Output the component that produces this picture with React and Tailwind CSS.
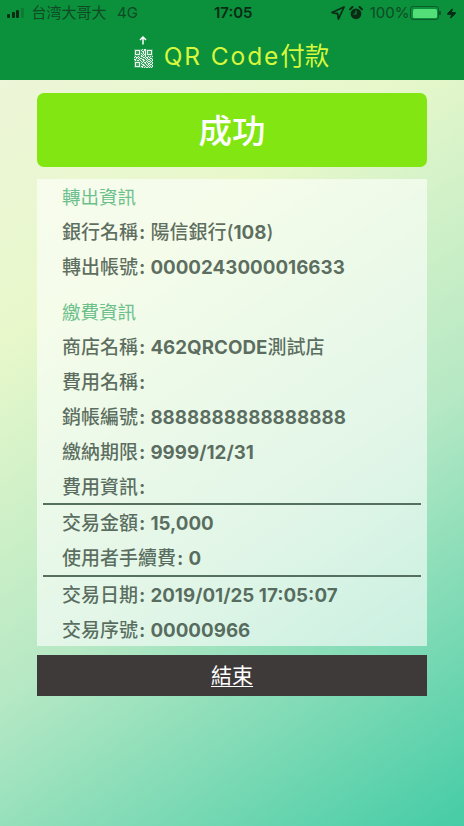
import React from 'react';
import { Zap } from 'lucide-react';

const FONT = 'font-["Inter","Noto_Sans_CJK_TC",sans-serif]';

// qr pattern, finder squares are added separately
const QR_ROWS = [
    '0000000101000000000',
    '0000000011000000000',
    '0000000100100000000',
    '0000000110100000000',
    '0000000010100000000',
    '0000000101000000000',
    '0000000010100000000',
    '1011011001101101010',
    '0100101110010010111',
    '1101010011101011001',
    '0011101100110100110',
    '1010010110011011010',
    '0000000010110100101',
    '0000000101001011010',
    '0000000011101100110',
    '0000000100110101001',
    '0000000110011010110',
    '0000000001101101010',
    '0000000101010010101',
];

const Finder = ({ x, y }) => (
    <g>
        <rect x={x} y={y} width="7" height="7" fill="#3fa566" />
        <rect x={x + 1} y={y + 1} width="5" height="5" fill="#e6f7ea" />
        <rect x={x + 2} y={y + 2} width="3" height="3" fill="#3fa566" />
    </g>
);

const QrIcon = () => (
    <svg width="19" height="19" viewBox="0 0 19 19" className="block">
        <rect width="19" height="19" fill="#e6f7ea" />
        {QR_ROWS.map((row, y) =>
            row.split('').map((c, x) =>
                c === '1' ? <rect key={`${x}-${y}`} x={x} y={y} width="1" height="1" fill="#3fa566" /> : null
            )
        )}
        <Finder x={0} y={0} />
        <Finder x={12} y={0} />
        <Finder x={0} y={12} />
    </svg>
);

const Row = ({ label, children }) => (
    <div className="h-[34.8px] pl-[25px] pt-[4px] flex items-center text-[19px] font-medium text-[#2c3f33]/75 whitespace-nowrap">
        <span>{label}</span>
        <span className="font-bold ml-[1px]">:</span>
        {children && <span className="ml-[5px]">{children}</span>}
    </div>
);

const Num = ({ children }) => <span className="font-bold text-[18.8px]">{children}</span>;

const Heading = ({ children }) => (
    <div className="h-[34.8px] pl-[25px] pt-[3px] flex items-center text-[18.5px] text-[#6cc08c]">{children}</div>
);

const Divider = () => <div className="mx-[6px] h-[2px] bg-[#56705f]" />;

export default function App() {
    return (
        <div className={`w-[464px] h-[826px] overflow-hidden flex flex-col bg-[linear-gradient(146deg,#eef5dc_0%,#e8f8cb_30%,#b5e8c4_62%,#45cca6_100%)] ${FONT}`}>
            <div className="h-[80px] bg-[#0b903c] flex flex-col shrink-0">
                <div className="h-[26px] flex items-center px-[7px] text-[15px] text-[#0f4a25] relative">
                    <div className="flex items-end gap-[1.5px]">
                        <span className="w-[3px] h-[4px] rounded-[1px] bg-[#0a2c15]" />
                        <span className="w-[3px] h-[6px] rounded-[1px] bg-[#0a2c15]" />
                        <span className="w-[3px] h-[8px] rounded-[1px] bg-[#0a2c15]" />
                        <span className="w-[3px] h-[10px] rounded-[1px] bg-[#0e7a34]" />
                    </div>
                    <span className="ml-[8px] w-[88px] text-[15px]">台湾大哥大</span>
                    <span className="ml-[2px]">4G</span>
                    <span className="ml-[76px] font-semibold text-[#0a2c15] w-[123px]">17:05</span>
                    <svg width="14" height="14" viewBox="0 0 14 14" className="shrink-0">
                        <path d="M13 1 L1 6.5 L6.5 7.5 L7.5 13 Z" fill="none" stroke="#0a2c15" strokeWidth="1.8" strokeLinejoin="round" />
                    </svg>
                    <svg width="14" height="14" viewBox="0 0 14 14" className="ml-[4px] shrink-0">
                        <circle cx="7" cy="7.8" r="5.4" fill="#0a2c15" />
                        <path d="M1 3.4 L3.4 1 M13 3.4 L10.6 1" stroke="#0a2c15" strokeWidth="2" strokeLinecap="round" />
                        <path d="M7 4.6 V8 H4.6" fill="none" stroke="#0b903c" strokeWidth="1.1" />
                    </svg>
                    <span className="ml-[7px] w-[43px] text-[15px]">100%</span>
                    <div className="w-[29px] h-[14px] rounded-[3px] border border-[#0d5a2a] p-[1.5px] shrink-0">
                        <div className="w-full h-full rounded-[1.5px] bg-[#54de78]" />
                    </div>
                    <span className="w-[1.5px] h-[4px] bg-[#0d5a2a] shrink-0" />
                    <Zap size={11} className="text-[#0a2c15] ml-[5px] shrink-0" fill="#0a2c15" />
                </div>
                <div className="flex-1 flex items-start justify-center">
                    <div className="flex flex-col items-center mr-[11px] mt-[10px] -ml-[1px]">
                        <svg width="8" height="9" viewBox="0 0 8 9" className="mb-[4px]">
                            <path d="M4 8.5 V1 M1 4 L4 1 L7 4" fill="none" stroke="#fff" strokeWidth="1.5" />
                        </svg>
                        <QrIcon />
                    </div>
                    <div className="text-[#d8f83e] text-[24.5px] leading-[30px] mt-[15px] whitespace-nowrap">
                        <span className="tracking-[1.9px]">QR Code</span>
                        <span>付款</span>
                    </div>
                </div>
            </div>

            <div className="px-[37px] flex flex-col flex-1">
                <div className="mt-[13px] h-[74px] rounded-[7px] bg-[#82e612] flex items-center justify-center pt-[2px] text-white text-[33.5px] font-medium shrink-0">
                    成功
                </div>
                <div className="mt-[12px] h-[467px] bg-white/60 shrink-0">
                    <Heading>轉出資訊</Heading>
                    <Row label="銀行名稱">陽信銀行(<Num>108</Num>)</Row>
                    <Row label="轉出帳號"><Num>0000243000016633</Num></Row>
                    <div className="h-[11px]" />
                    <Heading>繳費資訊</Heading>
                    <Row label="商店名稱"><Num>462QRCODE</Num>測試店</Row>
                    <Row label="費用名稱" />
                    <Row label="銷帳編號"><Num>8888888888888888</Num></Row>
                    <Row label="繳納期限"><Num>9999/12/31</Num></Row>
                    <Row label="費用資訊" />
                    <Divider />
                    <Row label="交易金額"><Num>15,000</Num></Row>
                    <Row label="使用者手續費"><Num>0</Num></Row>
                    <Divider />
                    <Row label="交易日期"><Num>2019/01/25 17:05:07</Num></Row>
                    <Row label="交易序號"><Num>00000966</Num></Row>
                </div>
                <div className="mt-[9px] h-[41px] bg-[#3e3a39] flex items-center justify-center text-white text-[21px] underline decoration-1 underline-offset-[3px] shrink-0">
                    結束
                </div>
            </div>
        </div>
    );
}
